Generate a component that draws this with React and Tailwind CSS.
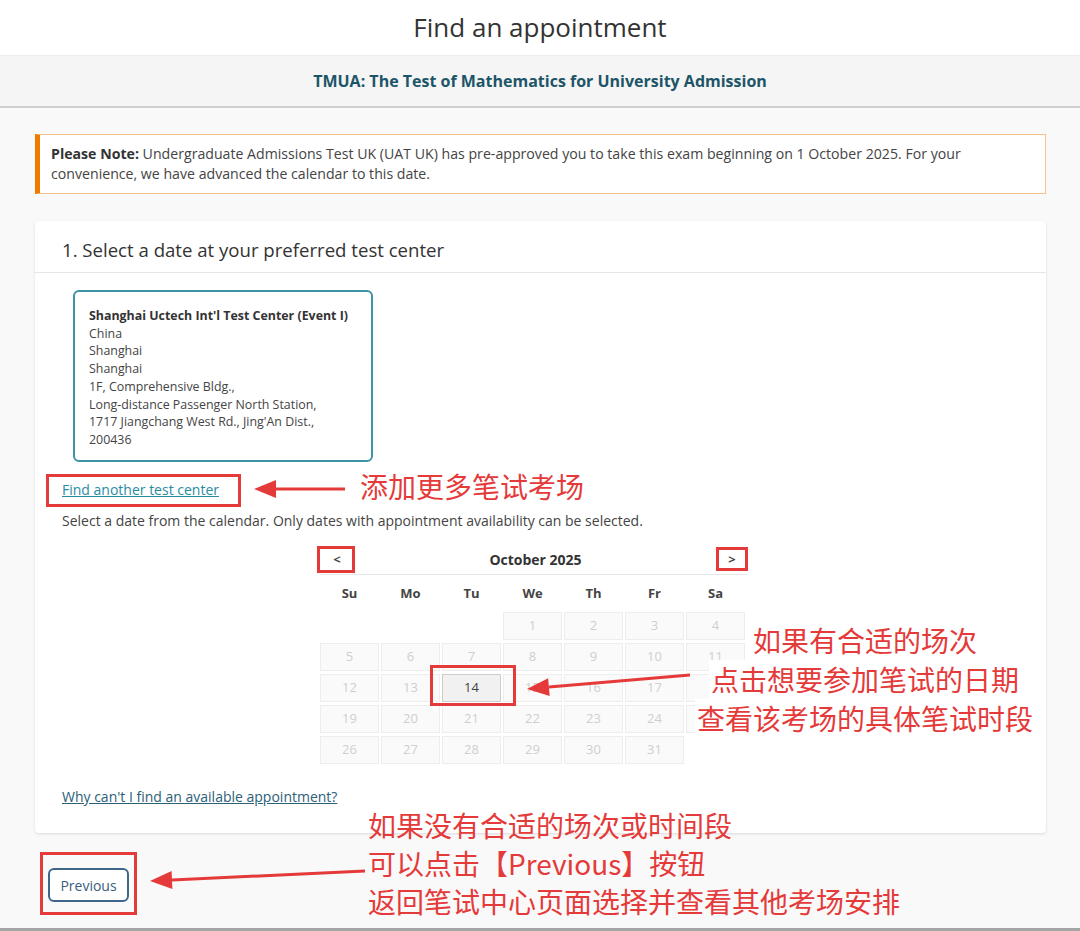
import React from "react";

const weeks = [
  [null, null, null, 1, 2, 3, 4],
  [5, 6, 7, 8, 9, 10, 11],
  [12, 13, 14, 15, 16, 17, 18],
  [19, 20, 21, 22, 23, 24, 25],
  [26, 27, 28, 29, 30, 31, null],
];

const dayNames = ["Su", "Mo", "Tu", "We", "Th", "Fr", "Sa"];

const centerLines = [
  "Shanghai Uctech Int'l Test Center (Event I)",
  "China",
  "Shanghai",
  "Shanghai",
  "1F, Comprehensive Bldg.,",
  "Long-distance Passenger North Station,",
  "1717 Jiangchang West Rd., Jing'An Dist.,",
  "200436",
];

const Calendar = () => {
  return (
    <div className="w-[427px] ml-[258px] mt-[14px]">
      <div className="flex items-center justify-between h-[30px] border-b border-[#e8e8e8]">
        <button className="w-[34px] h-[26px] text-[13px] font-bold text-[#444]">&lt;</button>
        <span className="text-[14px] font-bold text-[#333]">October 2025</span>
        <button className="w-[30px] h-[26px] text-[13px] font-bold text-[#444]">&gt;</button>
      </div>
      <div className="grid grid-cols-[repeat(7,59px)] gap-x-[2px] h-[37px] items-center">
        {dayNames.map((d) => (
          <span key={d} className="text-center text-[13px] font-bold text-[#444]">
            {d}
          </span>
        ))}
      </div>
      <div className="grid grid-cols-[repeat(7,59px)] gap-x-[2px] gap-y-[3px]">
        {weeks.flat().map((day, i) =>
          day === null ? (
            <div key={i} className="h-[28px]" />
          ) : day === 14 ? (
            <div
              key={i}
              className="h-[28px] flex items-center justify-center bg-[#f1f1f1] border border-[#cdcdcd] text-[13px] text-[#444]"
            >
              {day}
            </div>
          ) : (
            <div
              key={i}
              className="h-[28px] flex items-center justify-center bg-[#fafafa] border border-[#ededed] text-[13px] text-[#cfcfcf]"
            >
              {day}
            </div>
          )
        )}
      </div>
    </div>
  );
};

const Annotations = () => {
  const red = "#e53a3a";
  const cjk = { fontFamily: '"Noto Sans CJK SC", sans-serif' };
  return (
    <div className="absolute inset-0 pointer-events-none">
      {/* highlight boxes */}
      <div className="absolute left-[46px] top-[474px] w-[195px] h-[33px] border-[3px] border-[#e53a3a]" />
      <div className="absolute left-[317px] top-[546px] w-[38px] h-[27px] border-[3px] border-[#e53a3a]" />
      <div className="absolute left-[716px] top-[547px] w-[32px] h-[24px] border-[3px] border-[#e53a3a]" />
      <div className="absolute left-[430px] top-[665px] w-[86px] h-[41px] border-[3px] border-[#e53a3a]" />
      <div className="absolute left-[40px] top-[852px] w-[97px] h-[63px] border-[3px] border-[#e53a3a]" />

      <svg className="absolute inset-0" width="1080" height="931">
        <line x1="345" y1="489" x2="274" y2="489" stroke={red} strokeWidth="3" />
        <polygon points="254,489 276,480 276,498" fill={red} />
        <line x1="690" y1="675" x2="549" y2="687" stroke={red} strokeWidth="3" />
        <polygon points="527,689 549.7,696.1 548.1,678.2" fill={red} />
        <line x1="365" y1="871" x2="172" y2="880" stroke={red} strokeWidth="3" />
        <polygon points="150,881 172.4,889.1 171.6,871.1" fill={red} />
      </svg>

      <div className="absolute left-[360px] top-[471px] text-[28px] leading-[30px] text-[#e53a3a]" style={cjk}>
        添加更多笔试考场
      </div>
      {/* callout lines sit on a white backing so the calendar cells behind them drop out */}
      <div
        className="absolute left-[665px] top-[621px] w-[400px] flex flex-col items-center text-[28px] leading-[39px] text-[#e53a3a]"
        style={cjk}
      >
        <span className="bg-white px-[2px]">如果有合适的场次</span>
        <span className="bg-white px-[2px]">点击想要参加笔试的日期</span>
        <span className="bg-white px-[2px]">查看该考场的具体笔试时段</span>
      </div>
      <div className="absolute left-[368px] top-[806px] text-[28px] leading-[38px] text-[#e53a3a]" style={cjk}>
        <div>如果没有合适的场次或时间段</div>
        <div>可以点击【Previous】按钮</div>
        <div>返回笔试中心页面选择并查看其他考场安排</div>
      </div>
    </div>
  );
};

const App = () => {
  return (
    <div
      className="relative min-h-[931px] flex flex-col bg-[#f9f9f9] text-[#333]"
      style={{ fontFamily: '"Open Sans", sans-serif' }}
    >
      <header className="h-[55px] bg-white flex items-center justify-center">
        <h1 className="text-[26px] text-[#333]">Find an appointment</h1>
      </header>

      <div className="h-[53px] bg-[#f5f5f5] border-t border-[#ececec] border-b-2 border-b-[#cfcfcf] flex items-center justify-center">
        <h2 className="text-[16px] font-bold text-[#1d5568]">
          TMUA: The Test of Mathematics for University Admission
        </h2>
      </div>

      <main className="flex-1 px-[35px] pt-[26px] pr-[34px]">
        <div className="bg-white border border-[#f5c18c] border-l-[5px] border-l-[#ef7a00] px-[11px] py-[9px] text-[14.15px] leading-[20px] text-[#444]">
          <span className="font-bold text-[#333]">Please Note:</span> Undergraduate Admissions Test UK (UAT UK) has
          pre-approved you to take this exam beginning on 1 October 2025. For your
          <br />
          convenience, we have advanced the calendar to this date.
        </div>

        <section className="mt-[27px] bg-white rounded-sm shadow-[0_1px_3px_rgba(0,0,0,0.12)]">
          <div className="h-[52px] px-[27px] pt-[7px] flex items-center border-b border-[#e6e6e6]">
            <h3 className="text-[18.6px] text-[#333]">1. Select a date at your preferred test center</h3>
          </div>

          <div className="px-[27px] pt-[17px] pb-[26px]">
            <div className="ml-[11px] w-[300px] h-[172px] border-2 border-[#3f93a6] rounded-md px-[14px] pt-[15px] text-[12.4px] leading-[17.7px] text-[#444] whitespace-nowrap">
              {centerLines.map((line, i) => (
                <div key={i} className={i === 0 ? "font-bold text-[#333]" : ""}>
                  {line}
                </div>
              ))}
            </div>

            <a href="#" className="block mt-[18px] w-fit text-[14px] leading-[20px] text-[#2a8ca3] underline">
              Find another test center
            </a>

            <p className="mt-[11px] text-[14px] leading-[20px] text-[#444]">
              Select a date from the calendar. Only dates with appointment availability can be selected.
            </p>

            <Calendar />

            <a href="#" className="block mt-[23px] w-fit text-[14px] leading-[20px] text-[#2b6077] underline">
              Why can't I find an available appointment?
            </a>
          </div>
        </section>

        <button className="mt-[35px] ml-[13px] w-[81px] h-[34px] bg-white border-2 border-[#3e6688] rounded-md text-[14px] text-[#3a5d7e]">
          Previous
        </button>
      </main>

      <div className="h-[3px] bg-[#a5a5a5]" />

      <Annotations />
    </div>
  );
};

export default App;
